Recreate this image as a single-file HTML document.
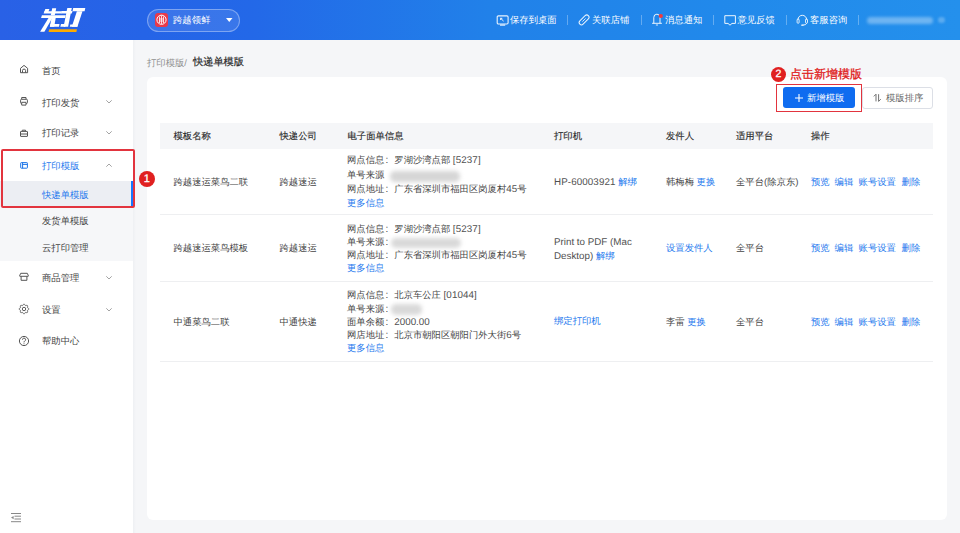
<!DOCTYPE html>
<html><head><meta charset="utf-8">
<style>
*{box-sizing:border-box;margin:0;padding:0}
html,body{width:960px;height:533px;overflow:hidden}
body{position:relative;background:#f5f6f8;font-family:"Liberation Sans",sans-serif;font-size:9.33px;color:#444;-webkit-text-stroke:0px currentColor;text-rendering:geometricPrecision}
.a{position:absolute;white-space:nowrap;line-height:14px}
#hd{position:absolute;left:0;top:0;width:960px;height:40px;background:linear-gradient(90deg,#2961e6 0%,#2564e7 15%,#2368e8 26%,#2181e9 51%,#2189eb 75%,#2490ec 100%)}
#sb{position:absolute;left:0;top:40px;width:133px;height:493px;background:#fff}
.w{color:#fff;-webkit-text-stroke:0}
.g{color:#8f8f8f}
.b{color:#2478ee}
.m{color:#2a2a2a;-webkit-text-stroke:0.15px #2a2a2a}
.l{font-style:normal;color:#505050;font-size:9.8px;letter-spacing:.1px}
.k{display:inline-block;width:47.3px;text-decoration:none}
.c{font-style:normal;margin-left:1.2px;font-size:10px}
.sep{position:absolute;top:15px;width:1px;height:10px;background:rgba(255,255,255,.3)}
#card{position:absolute;left:146.7px;top:76.6px;width:800px;height:443.4px;background:#fff;border-radius:6px}
svg{position:absolute;overflow:visible}
.hl{position:absolute;left:160px;width:773px;height:1px;background:#eeeff1}
</style></head><body>
<div id="hd"></div>
<!-- logo -->
<svg style="left:0;top:0" width="100" height="40" viewBox="0 0 100 40"><g fill="#fff">
<path d="M45.3 9.1H49.4L48.2 12.5H44.1z"/>
<path d="M44.4 11.2H62L61.2 13.6H43.6z"/>
<path d="M52.2 8.3H56.2L54.8 15.3H50.8z"/>
<path d="M41.9 15.2H65.8L65 17.9H41.1z"/>
<path d="M48.5 17.9H52.3L44.4 31.8H40.1z"/>
<path d="M51.5 17.9H55.7L54.2 26.7H49.9z"/>
<path d="M50.5 24H59.5L59 26.7H49.9z"/>
<path d="M61.6 10.9H72.5L71.8 13.5H60.9z"/>
<path d="M67.3 8.1H71.8L68.1 26.7H63.6z"/>
<path d="M61 24.1H66L65.2 26.7H60.3z"/>
<path d="M73.2 8.1H85.3L84.6 11.2H72.5z"/>
<path d="M76.9 11.2H82.5L77.4 26.7H71.8z"/>
<path d="M70.3 24.4H77.8L77.4 26.7H69.8z"/>
</g><path d="M49.2 29.2H77L76.4 32H48.6z" fill="#fdab00"/></svg>
<!-- shop pill -->
<div style="position:absolute;left:147px;top:8.5px;width:93px;height:23px;border-radius:12px;border:1px solid rgba(255,255,255,.35);background:rgba(255,255,255,.1)"></div>
<div style="position:absolute;left:155px;top:13px;width:13px;height:13.5px;border-radius:3px;background:#e8394a"></div>
<svg style="left:155px;top:13px" width="13" height="13.5" viewBox="0 0 13 13.5"><circle cx="6.5" cy="6.75" r="4.6" fill="none" stroke="#fff" stroke-width="1"/><path d="M4.5 3.5v6.5M6.5 2.5v8.5M8.5 3.5v6.5M4.5 6h4M4.5 8h4" stroke="#fff" stroke-width=".8" fill="none"/></svg>
<div class="a w" style="left:173px;top:13.0px">跨越领鲜</div>
<svg style="left:226px;top:18px" width="7" height="5"><path d="M0 0h6.5L3.25 4z" fill="#fff"/></svg>
<!-- header right -->
<svg style="left:495.5px;top:14.5px" width="13" height="11" viewBox="0 0 13 11"><rect x="1.2" y=".9" width="10.9" height="8.1" rx="1.2" fill="none" stroke="#fff" stroke-width="1.1" opacity=".9"/><path d="M4 10.1h5.2" stroke="#fff" stroke-width="1.2" opacity=".9"/><path d="M4.6 3.3L7.6 6.1M4.6 3.3v1.7M4.6 3.3h1.7" fill="none" stroke="#fff" stroke-width=".9"/></svg>
<div class="a w" style="left:510px;top:12.8px">保存到桌面</div>
<div class="sep" style="left:567px"></div>
<svg style="left:577px;top:13px" width="14" height="14" viewBox="0 0 14 14"><rect x="1.1" y="4.65" width="12" height="4.6" rx="2.3" fill="none" stroke="#fff" stroke-width="1" transform="rotate(-45 7.1 6.95)" opacity=".9"/><path d="M5.4 8.6L8.6 5.4" stroke="#fff" stroke-width=".9" opacity=".85"/></svg>
<div class="a w" style="left:592px;top:12.8px">关联店铺</div>
<div class="sep" style="left:640.5px"></div>
<svg style="left:651px;top:13px" width="13" height="13" viewBox="0 0 13 13"><path d="M2.8 10.3V4.4A3.1 3.2 0 0 1 9 4.4V10.3M1.1 10.3H10.9" fill="none" stroke="#fff" stroke-width="1" opacity=".9"/><path d="M4.9 12H7" stroke="#fff" stroke-width="1" opacity=".8"/><circle cx="9.8" cy="3" r="2.1" fill="#f5393a"/></svg>
<div class="a w" style="left:665px;top:12.8px">消息通知</div>
<div class="sep" style="left:712.5px"></div>
<svg style="left:723.5px;top:14.5px" width="12" height="11" viewBox="0 0 12 11"><path d="M.8 .7H11.4V8.4H8L6 10.2L4 8.4H.8Z" fill="none" stroke="#fff" stroke-width="1" stroke-linejoin="round" opacity=".92"/></svg>
<div class="a w" style="left:737.5px;top:12.8px">意见反馈</div>
<div class="sep" style="left:785.5px"></div>
<svg style="left:795.5px;top:13.5px" width="13" height="13" viewBox="0 0 13 13"><path d="M2 5.6A4.3 4.3 0 0 1 10.6 5.6" fill="none" stroke="#fff" stroke-width="1" opacity=".9"/><rect x="1.1" y="5" width="2" height="4.3" rx="1" fill="none" stroke="#fff" stroke-width=".9" opacity=".9"/><rect x="9.5" y="5" width="2" height="4.3" rx="1" fill="none" stroke="#fff" stroke-width=".9" opacity=".9"/><path d="M10.6 9.3Q10.3 11.1 6.8 11.1" fill="none" stroke="#fff" stroke-width=".9"/><rect x="5.2" y="10.5" width="2.3" height="1.3" rx=".6" fill="#fff"/></svg>
<div class="a w" style="left:810px;top:12.8px">客服咨询</div>
<div class="sep" style="left:858px"></div>
<div style="position:absolute;left:867px;top:16.5px;width:66px;height:7px;border-radius:4px;background:rgba(255,255,255,.34);filter:blur(1.5px)"></div>
<div style="position:absolute;left:938px;top:17px;width:7px;height:6px;border-radius:3px;background:rgba(255,255,255,.25);filter:blur(1.2px)"></div>

<!-- sidebar -->
<div id="sb"></div>
<div style="position:absolute;left:0;top:180.5px;width:133px;height:80px;background:#f6f7f9"></div>
<div style="position:absolute;left:0;top:181px;width:133px;height:25.5px;background:#eceef3"></div>
<div style="position:absolute;left:131px;top:181px;width:2px;height:25.5px;background:#1677ff"></div>
<div style="position:absolute;left:133px;top:40px;width:3px;height:493px;background:linear-gradient(90deg,#eef0f3,#f5f6f8)"></div>

<svg style="left:16px;top:61px" width="16" height="16" viewBox="0 0 16 16"><path d="M4.5 11.7V7.3L8 4.4L11.6 7.3V11.7H4.5Z" fill="none" stroke="#555" stroke-width="1" stroke-linejoin="round"/><path d="M6.5 11.7V9.6A1.55 1.55 0 0 1 9.6 9.6V11.7" fill="none" stroke="#555" stroke-width="1"/></svg>
<div class="a" style="left:42px;top:63.8px">首页</div>

<svg style="left:16px;top:94px" width="16" height="16" viewBox="0 0 16 16"><path d="M5.7 5.3V3.5H10V5.3" fill="none" stroke="#555" stroke-width="1"/><rect x="4.6" y="5.3" width="6.8" height="4.2" rx=".9" fill="none" stroke="#555" stroke-width="1"/><path d="M5.7 8.3H10V11.1H5.7Z" fill="#fff" stroke="#555" stroke-width="1"/></svg>
<div class="a" style="left:42px;top:95.5px">打印发货</div>
<svg style="left:106px;top:99.5px" width="6" height="4"><path d="M.3.3L3 3 5.7.3" fill="none" stroke="#999" stroke-width=".9"/></svg>

<svg style="left:16px;top:125px" width="16" height="16" viewBox="0 0 16 16"><path d="M6.3 6.3V5.2H9.5V6.3" fill="none" stroke="#555" stroke-width="1"/><rect x="4.5" y="6.4" width="7" height="5" rx=".4" fill="none" stroke="#555" stroke-width="1"/><path d="M4.5 9H11.5" stroke="#555" stroke-width="1"/></svg>
<div class="a" style="left:42px;top:126.2px">打印记录</div>
<svg style="left:106px;top:131px" width="6" height="4"><path d="M.3.3L3 3 5.7.3" fill="none" stroke="#999" stroke-width=".9"/></svg>

<svg style="left:16px;top:157px" width="16" height="16" viewBox="0 0 16 16"><rect x="4.7" y="5.6" width="6.7" height="5.6" rx=".6" fill="none" stroke="#1a73e8" stroke-width="1"/><path d="M6.6 5.6V11.2M6.6 7.4H11.4" fill="none" stroke="#1a73e8" stroke-width="1"/></svg>
<div class="a b" style="left:42px;top:158.5px">打印模版</div>
<svg style="left:106px;top:163px" width="6" height="4"><path d="M.3 3.7L3 1 5.7 3.7" fill="none" stroke="#999" stroke-width=".9"/></svg>

<div class="a b" style="left:42px;top:187.8px">快递单模版</div>
<div class="a" style="left:42px;top:213.8px">发货单模版</div>
<div class="a" style="left:42px;top:240.8px">云打印管理</div>

<svg style="left:16px;top:269px" width="16" height="16" viewBox="0 0 16 16"><path d="M4.7 4.3H11.3L12.4 6.8Q12.5 7.3 12 7.3H4Q3.5 7.3 3.6 6.8Z" fill="none" stroke="#555" stroke-width="1" stroke-linejoin="round"/><path d="M5.1 7.3V11.3H10.9V7.3" fill="none" stroke="#555" stroke-width="1"/></svg>
<div class="a" style="left:42px;top:270.8px">商品管理</div>
<svg style="left:106px;top:276px" width="6" height="4"><path d="M.3.3L3 3 5.7.3" fill="none" stroke="#999" stroke-width=".9"/></svg>

<svg style="left:16px;top:301px" width="16" height="16" viewBox="0 0 16 16"><path d="M8.00 3.15 L8.31 3.23 L8.60 3.46 L8.84 3.78 L9.04 4.11 L9.23 4.38 L9.44 4.54 L9.69 4.57 L10.01 4.51 L10.39 4.42 L10.79 4.37 L11.15 4.41 L11.43 4.57 L11.59 4.85 L11.63 5.21 L11.58 5.61 L11.49 5.99 L11.43 6.31 L11.46 6.56 L11.62 6.77 L11.89 6.96 L12.22 7.16 L12.54 7.40 L12.77 7.69 L12.85 8.00 L12.77 8.31 L12.54 8.60 L12.22 8.84 L11.89 9.04 L11.62 9.23 L11.46 9.44 L11.43 9.69 L11.49 10.01 L11.58 10.39 L11.63 10.79 L11.59 11.15 L11.43 11.43 L11.15 11.59 L10.79 11.63 L10.39 11.58 L10.01 11.49 L9.69 11.43 L9.44 11.46 L9.23 11.62 L9.04 11.89 L8.84 12.22 L8.60 12.54 L8.31 12.77 L8.00 12.85 L7.69 12.77 L7.40 12.54 L7.16 12.22 L6.96 11.89 L6.77 11.62 L6.56 11.46 L6.31 11.43 L5.99 11.49 L5.61 11.58 L5.21 11.63 L4.85 11.59 L4.57 11.43 L4.41 11.15 L4.37 10.79 L4.42 10.39 L4.51 10.01 L4.57 9.69 L4.54 9.44 L4.38 9.23 L4.11 9.04 L3.78 8.84 L3.46 8.60 L3.23 8.31 L3.15 8.00 L3.23 7.69 L3.46 7.40 L3.78 7.16 L4.11 6.96 L4.38 6.77 L4.54 6.56 L4.57 6.31 L4.51 5.99 L4.42 5.61 L4.37 5.21 L4.41 4.85 L4.57 4.57 L4.85 4.41 L5.21 4.37 L5.61 4.42 L5.99 4.51 L6.31 4.57 L6.56 4.54 L6.77 4.38 L6.96 4.11 L7.16 3.78 L7.40 3.46 L7.69 3.23 L8.00 3.15Z" fill="none" stroke="#555" stroke-width=".95"/><circle cx="8" cy="8" r="1.7" fill="none" stroke="#555" stroke-width=".95"/></svg>
<div class="a" style="left:42px;top:303.0px">设置</div>
<svg style="left:106px;top:308px" width="6" height="4"><path d="M.3.3L3 3 5.7.3" fill="none" stroke="#999" stroke-width=".9"/></svg>

<svg style="left:16px;top:333px" width="16" height="16" viewBox="0 0 16 16"><circle cx="8" cy="8" r="4.6" fill="none" stroke="#555" stroke-width="1"/><path d="M6.5 6.7A1.55 1.55 0 1 1 8.6 8.1Q8 8.5 8 9.4" fill="none" stroke="#555" stroke-width="1"/><circle cx="8" cy="10.8" r=".55" fill="#555"/></svg>
<div class="a" style="left:42px;top:334.3px">帮助中心</div>

<svg style="left:11px;top:513px" width="10" height="10" viewBox="0 0 10 10"><path d="M0 .5h10M3.5 3.2H10M3.5 6H10M0 8.7h10" stroke="#888" stroke-width="1"/><path d="M0 4.6L2.6 2.9v3.4z" fill="#888"/></svg>

<!-- main -->
<div class="a g" style="left:147px;top:55.7px">打印模版/</div>
<div class="a" style="left:193px;top:55.5px;font-size:10.2px;color:#2a2a2a;-webkit-text-stroke:.2px #2a2a2a">快递单模版</div>

<div id="card"></div>

<!-- buttons -->
<div style="position:absolute;left:782.5px;top:87.2px;width:72px;height:21.3px;border-radius:3px;background:#0f6cf0"></div>
<svg style="left:795px;top:93.5px" width="8" height="8"><path d="M4 0v8M0 4h8" stroke="#fff" stroke-width="1.1"/></svg>
<div class="a w" style="left:807px;top:90.5px">新增模版</div>
<div style="position:absolute;left:862px;top:87px;width:71px;height:21.5px;border-radius:3px;border:1px solid #dcdfe6;background:#fff"></div>
<svg style="left:872px;top:92px" width="10" height="12" viewBox="0 0 10 12"><path d="M4 2.2V9.4M4 2.2L1.8 4.4M6.6 2.2V9.4M6.6 9.4L8.8 7.2" fill="none" stroke="#6a6a6a" stroke-width=".95"/></svg>
<div class="a" style="left:886px;top:90.5px;color:#666">模版排序</div>

<!-- table header -->
<div style="position:absolute;left:160px;top:123px;width:773px;height:25.5px;background:#f5f6f8"></div>
<div class="a m" style="left:173.5px;top:129.2px">模板名称</div>
<div class="a m" style="left:279.5px;top:129.2px">快递公司</div>
<div class="a m" style="left:347.5px;top:129.2px">电子面单信息</div>
<div class="a m" style="left:554px;top:129.2px">打印机</div>
<div class="a m" style="left:666px;top:129.2px">发件人</div>
<div class="a m" style="left:736px;top:129.2px">适用平台</div>
<div class="a m" style="left:811px;top:129.2px">操作</div>

<!-- row 1 -->
<div class="a" style="left:173.5px;top:174.8px">跨越速运菜鸟二联</div>
<div class="a" style="left:279.5px;top:174.8px">跨越速运</div>
<div class="a" style="left:347px;top:153.0px"><s class="k">网点信息<i class="c">:</i></s>罗湖沙湾点部 <i class="l">[5237]</i></div>
<div class="a" style="left:347px;top:167.6px">单号来源</div>
<div style="position:absolute;left:390px;top:170.5px;width:70px;height:11.5px;border-radius:5px;background:#d6d6d6;filter:blur(2px)"></div>
<div class="a" style="left:347px;top:181.7px"><s class="k">网点地址<i class="c">:</i></s>广东省深圳市福田区岗厦村<i class="l">45</i>号</div>
<div class="a b" style="left:347px;top:196.3px">更多信息</div>
<div class="a" style="left:554px;top:175.0px"><i class="l">HP-60003921</i> <span class="b">解绑</span></div>
<div class="a" style="left:666px;top:175.0px">韩梅梅 <span class="b">更换</span></div>
<div class="a" style="left:736px;top:175.0px">全平台<i class="l">(</i>除京东<i class="l">)</i></div>
<div class="a b" style="left:811px;top:175.0px">预览</div><div class="a b" style="left:834.6px;top:175.0px">编辑</div><div class="a b" style="left:858.6px;top:175.0px">账号设置</div><div class="a b" style="left:901.6px;top:175.0px">删除</div>
<div class="hl" style="top:214px"></div>

<!-- row 2 -->
<div class="a" style="left:173.5px;top:241.3px">跨越速运菜鸟模板</div>
<div class="a" style="left:279.5px;top:241.3px">跨越速运</div>
<div class="a" style="left:347px;top:221.6px"><s class="k">网点信息<i class="c">:</i></s>罗湖沙湾点部 <i class="l">[5237]</i></div>
<div class="a" style="left:347px;top:235.1px"><s class="k">单号来源<i class="c">:</i></s></div>
<div style="position:absolute;left:391px;top:237.5px;width:70px;height:10.5px;border-radius:5px;background:#d9d9d9;filter:blur(2px)"></div>
<div class="a" style="left:347px;top:247.8px"><s class="k">网点地址<i class="c">:</i></s>广东省深圳市福田区岗厦村<i class="l">45</i>号</div>
<div class="a b" style="left:347px;top:261.0px">更多信息</div>
<div class="a" style="left:554px;top:235px"><i class="l" style="letter-spacing:0">Print to PDF (Mac</i></div>
<div class="a" style="left:554px;top:248.5px"><i class="l" style="letter-spacing:0">Desktop) </i><span class="b">解绑</span></div>
<div class="a b" style="left:666px;top:241.3px">设置发件人</div>
<div class="a" style="left:736px;top:241.3px">全平台</div>
<div class="a b" style="left:811px;top:241.3px">预览</div><div class="a b" style="left:834.6px;top:241.3px">编辑</div><div class="a b" style="left:858.6px;top:241.3px">账号设置</div><div class="a b" style="left:901.6px;top:241.3px">删除</div>
<div class="hl" style="top:280.5px"></div>

<!-- row 3 -->
<div class="a" style="left:173.5px;top:315.0px">中通菜鸟二联</div>
<div class="a" style="left:279.5px;top:315.0px">中通快递</div>
<div class="a" style="left:347px;top:288.3px"><s class="k">网点信息<i class="c">:</i></s>北京车公庄 <i class="l">[01044]</i></div>
<div class="a" style="left:347px;top:301.8px"><s class="k">单号来源<i class="c">:</i></s></div>
<div style="position:absolute;left:390.5px;top:303.5px;width:31px;height:11px;border-radius:5px;background:#d9d9d9;filter:blur(2.2px)"></div>
<div class="a" style="left:347px;top:315.0px"><s class="k">面单余额<i class="c">:</i></s><i class="l" style="letter-spacing:0">2000.00</i></div>
<div class="a" style="left:347px;top:328.3px"><s class="k">网店地址<i class="c">:</i></s>北京市朝阳区朝阳门外大街<i class="l">6</i>号</div>
<div class="a b" style="left:347px;top:341.1px">更多信息</div>
<div class="a b" style="left:554px;top:314.0px">绑定打印机</div>
<div class="a" style="left:666px;top:315.0px">李雷 <span class="b">更换</span></div>
<div class="a" style="left:736px;top:315.0px">全平台</div>
<div class="a b" style="left:811px;top:315.0px">预览</div><div class="a b" style="left:834.6px;top:315.0px">编辑</div><div class="a b" style="left:858.6px;top:315.0px">账号设置</div><div class="a b" style="left:901.6px;top:315.0px">删除</div>
<div class="hl" style="top:360.5px"></div>

<!-- annotations -->
<div style="position:absolute;left:1px;top:149px;width:134px;height:59px;border:2px solid #e2343e;border-radius:2px"></div>
<div style="position:absolute;left:138.7px;top:171px;width:16px;height:16px;border-radius:50%;background:#e02020;color:#fff;font-size:11px;line-height:16px;text-align:center;-webkit-text-stroke:.3px #fff">1</div>
<div style="position:absolute;left:776px;top:84px;width:85.5px;height:28px;border:1.6px solid #e2343e"></div>
<div style="position:absolute;left:771px;top:66.5px;width:15px;height:15px;border-radius:50%;background:#e02020;color:#fff;font-size:10.5px;line-height:15px;text-align:center;-webkit-text-stroke:.3px #fff">2</div>
<div class="a" style="left:790px;top:66.5px;font-size:12px;color:#e02020;-webkit-text-stroke:.3px #e02020">点击新增模版</div>
</body></html>
